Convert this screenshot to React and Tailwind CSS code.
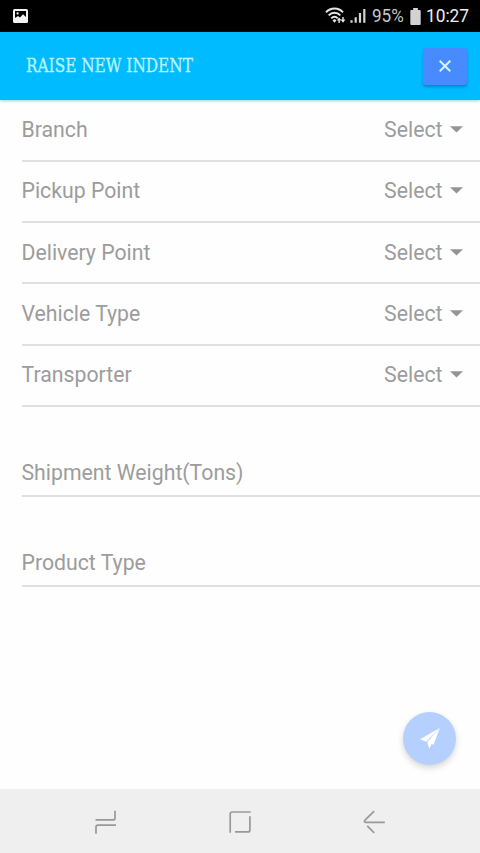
const selects = [
  { label: "Branch", size: "h-[62px] pt-[17px]" },
  { label: "Pickup Point", size: "h-[61px] pt-4" },
  { label: "Delivery Point", size: "h-[61px] pt-[17px]" },
  { label: "Vehicle Type", size: "h-[62px] pt-[17px]" },
  { label: "Transporter", size: "h-[61px] pt-4" },
];

function StatusBar() {
  return (
    <div className="flex h-8 shrink-0 items-center bg-black pl-[13px] text-[19px] leading-8 text-[#eeeeee]">
      <svg width="15" height="14" viewBox="0 0 15 14">
        <rect width="15" height="14" rx="1.5" fill="#f2f2f2" />
        <path d="M2 2h11v6L10 5.2 7 8.4 5 7 2 9z" fill="#000" />
        <circle cx="4.6" cy="4.4" r="1.1" fill="#f2f2f2" />
      </svg>
      <svg className="ml-auto shrink-0" width="43" height="18" viewBox="0 0 43 18" fill="none" stroke="#e8e8e8">
        <path d="M1 5.3C5.5.2 13.5.2 18 5.3" strokeWidth="1.9" />
        <path d="M3.7 8.4c3.3-3.6 8.3-3.6 11.6 0" strokeWidth="1.9" />
        <path d="M6.3 11.4c1.9-2.1 4.5-2.1 6.4 0" strokeWidth="1.9" />
        <path d="M7.6 13.4a2.5 2.5 0 0 1 3.8 0L9.5 15.8z" fill="#e8e8e8" stroke="none" />
        <path d="M11.8 13.4l2.3-3 2.3 3zM15.6 12.6h4.8l-2.4 3.1z" fill="#e8e8e8" stroke="none" />
        <path d="M14.1 12.5v3.5M18 10v3" strokeWidth="1.4" />
        <path d="M26.5 15.8v-2.6M30.7 15.8v-5.6M35 15.8V6M39.3 15.8V2" strokeWidth="2.2" stroke="#d4d4d4" />
      </svg>
      <span className="ml-[4px] w-[32px] whitespace-nowrap">
        <span className="inline-block origin-left scale-x-[0.9] text-[#c8c8c8]">95%</span>
      </span>
      <svg className="ml-[6px] shrink-0" width="11" height="17" viewBox="0 0 11 18" fill="#d2d2d2">
        <path d="M3 0h5v2h2q1 0 1 1v14q0 1-1 1H1q-1 0-1-1V3q0-1 1-1h2z" />
      </svg>
      <span className="ml-[5px] w-[54px] whitespace-nowrap">
        <span className="inline-block origin-left scale-x-[0.91]">10:27</span>
      </span>
    </div>
  );
}

function Header() {
  return (
    <header className="z-10 flex h-[68px] shrink-0 items-center justify-between bg-[#00bbff] pr-[13px] pl-[26px] shadow-[0_1px_3px_rgba(0,120,130,0.35)]">
      <h1 className="w-[168px] font-['Roboto_Slab','DejaVu_Serif_Condensed','DejaVu_Serif',serif] text-[18.5px] whitespace-nowrap text-[#b8f6ff] [-webkit-text-stroke:0.3px_#b8f6ff]">
        <span className="inline-block origin-left scale-x-[0.92]">RAISE NEW INDENT</span>
      </h1>
      <button className="flex h-[37px] w-[44px] items-center justify-center rounded-[3px] bg-[#488aff] shadow-[0_2px_3px_rgba(0,40,120,0.35)]">
        <svg width="12" height="12" viewBox="0 0 12 12" stroke="#d8f4ff" strokeWidth="2">
          <path d="M.7.7l10.6 10.6M11.3.7L.7 11.3" />
        </svg>
      </button>
    </header>
  );
}

function NavigationBar() {
  return (
    <nav className="flex h-16 shrink-0 items-center justify-between bg-[#efefef] px-[94px] pt-px">
      <svg width="24" height="26" viewBox="0 0 24 26" fill="none" stroke="#999" strokeWidth="1.7">
        <path d="M1.5 10.9H19q2 0 2-2V1.8M22 16.1H4q-2 0-2 2v6.7" />
      </svg>
      <svg width="24" height="24" viewBox="0 0 24 24" fill="none" stroke="#999" strokeWidth="1.7">
        <path d="M2.2 22.7V4q0-2 2-2h18.5M21.9 6.2v13.7q0 2-2 2H7" />
      </svg>
      <svg width="24" height="24" viewBox="0 0 24 24" fill="none" stroke="#999" strokeWidth="1.7">
        <path d="M22.8 12.3H3.5Q1.5 12 3 10.2L12.2 1.2M5.2 15.8l7 7" />
      </svg>
    </nav>
  );
}

export default function App() {
  return (
    <div className="relative flex h-[853px] w-[480px] flex-col overflow-hidden bg-[#fefefe] font-[Roboto,sans-serif]">
      <StatusBar />
      <Header />
      <main className="flex flex-1 flex-col pl-[21.5px] text-[21.25px] leading-[26px] text-[#9c9c9c]">
        {selects.map(({ label, size }) => (
          <div key={label} className={`flex items-start border-b-2 border-[#e0e0e0] pr-[17px] ${size}`}>
            <span className="flex-1">{label}</span>
            <span>Select</span>
            <svg className="mt-[9px] ml-[7.5px]" width="13" height="7" viewBox="0 0 13 7" fill="#949494">
              <path d="M0 .3h13L6.5 6.5z" />
            </svg>
          </div>
        ))}
        <div className="flex h-[90px] items-end border-b-2 border-[#e0e0e0] pb-[9px]">Shipment Weight(Tons)</div>
        <div className="flex h-[90px] items-end border-b-2 border-[#e0e0e0] pb-[9px]">Product Type</div>
      </main>
      <button className="absolute top-[712px] left-[403px] flex size-[53px] items-center justify-center rounded-full bg-[#b5d0ff] shadow-[0_3px_6px_rgba(0,0,0,0.16)]">
        <svg width="20" height="21" viewBox="0 0 20 21" fill="#fff">
          <path d="M19.8 0L0 11.3l6.2 2.5z" />
          <path d="M19.8 0L7.2 14.2l2.2 6.6 2.2-4.9 2 .8z" />
        </svg>
      </button>
      <NavigationBar />
    </div>
  );
}
